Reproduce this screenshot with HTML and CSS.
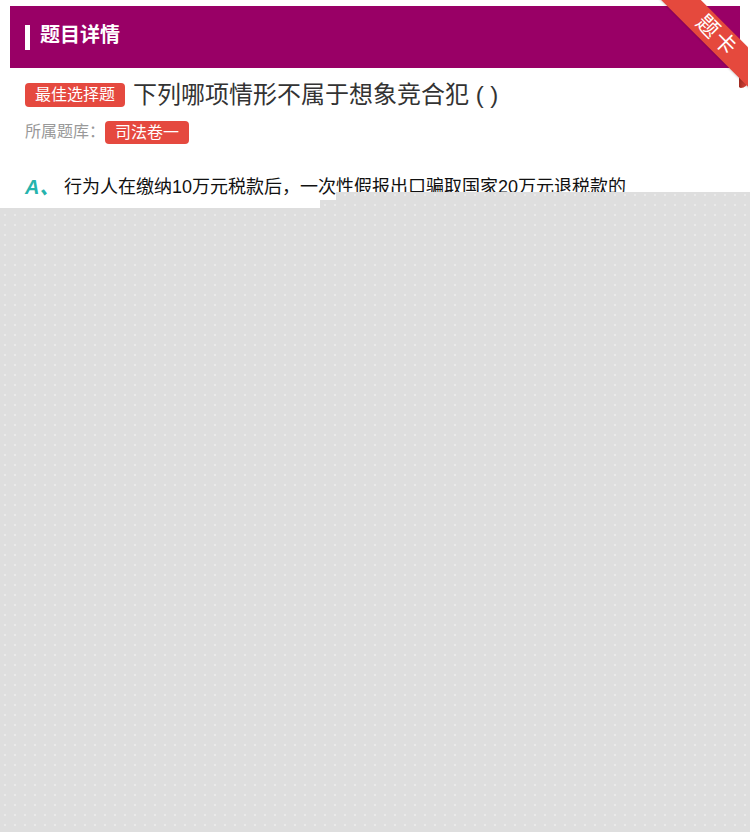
FILE: index.html
```html
<!DOCTYPE html>
<html lang="zh-CN">
<head>
<meta charset="utf-8">
<title>题目详情</title>
<link rel="stylesheet" href="styles.css">
</head>
<body>
<div class="page">
  <header class="header">
    <span class="header-bar"></span>
    <h1 class="header-title">题目详情</h1>
  </header>
  <div class="ribbon-wrap">
    <div class="ribbon-fold"></div>
    <div class="ribbon">题卡</div>
  </div>
  <main class="content">
    <div class="q-line">
      <span class="tag">最佳选择题</span>
      <span class="q-text">下列哪项情形不属于想象竞合犯 ( )</span>
    </div>
    <div class="bank-line">
      <span class="bank-label">所属题库：</span>
      <span class="tag tag-small">司法卷一</span>
    </div>
    <div class="option">
      <span class="option-key">A、</span>
      <span class="option-text">行为人在缴纳10万元税款后，一次性假报出口骗取国家20万元退税款的</span>
    </div>
  </main>
  <div class="cover cover-main"></div>
  <div class="cover cover-top"></div>
  <div class="cover cover-step"></div>
</div>
</body>
</html>
```
FILE: styles.css
```css
html, body {
  margin: 0;
  padding: 0;
  background: #ffffff;
}
body {
  font-family: "Liberation Sans", "Noto Sans CJK SC", sans-serif;
  width: 750px;
  height: 832px;
  overflow: hidden;
}
.page {
  position: relative;
  width: 750px;
  height: 832px;
  padding-top: 6px;
  box-sizing: border-box;
}
.header {
  margin: 0 10px;
  height: 62px;
  background: #990066;
  display: flex;
  align-items: center;
  padding-left: 15px;
  gap: 10px;
}
.header-bar {
  width: 5px;
  height: 25px;
  background: #ffffff;
}
.header-title {
  margin: 0;
  padding-bottom: 5px;
  font-size: 20px;
  font-weight: bold;
  color: #ffffff;
  line-height: 24px;
}
.ribbon-wrap {
  position: absolute;
  top: 0;
  left: 650px;
  width: 98px;
  height: 90px;
  overflow: hidden;
}
.ribbon-fold {
  position: absolute;
  left: 89px;
  top: 52px;
  width: 9px;
  height: 36px;
  background: linear-gradient(to right, #9e2a20, #d9443a 70%, #e24c40);
  border-radius: 0 0 8px 2px;
}
.ribbon {
  position: absolute;
  left: -19px;
  top: 21px;
  width: 170px;
  height: 28px;
  line-height: 28px;
  background: #e5493d;
  color: #ffffff;
  font-size: 22px;
  text-align: center;
  letter-spacing: 2px;
  text-indent: 2px;
  transform: rotate(45deg);
  box-shadow: 0 1px 2px rgba(0,0,0,0.15);
}
.content {
  padding: 0 25px;
}
.q-line {
  margin-top: 12px;
  height: 30px;
  display: flex;
  align-items: center;
  gap: 8px;
}
.tag {
  display: inline-block;
  background: #e5493f;
  color: #ffffff;
  font-size: 16px;
  line-height: 24px;
  padding: 0 10px;
  border-radius: 4px;
}
.tag-small {
  line-height: 23px;
}
.q-text {
  font-size: 24px;
  line-height: 30px;
  color: #333333;
}
.bank-line {
  margin-top: 10px;
  height: 24px;
  display: flex;
  align-items: center;
}
.bank-label {
  font-size: 16px;
  color: #999999;
  line-height: 24px;
}
.option {
  margin-top: 29px;
  display: flex;
  align-items: center;
  height: 28px;
}
.option-key {
  width: 39px;
  font-size: 20px;
  font-weight: bold;
  font-style: italic;
  color: #26b3ad;
  line-height: 28px;
}
.option-text {
  font-size: 18px;
  color: #111111;
  line-height: 28px;
}
.cover {
  position: absolute;
  background-color: #dedede;
  background-image: radial-gradient(circle, #e9e9e9 0.9px, transparent 1.2px);
  background-size: 10px 10px;
  background-position: 0 0;
  background-attachment: fixed;
}
.cover-main {
  left: 0;
  top: 208px;
  width: 750px;
  height: 624px;
}
.cover-top {
  left: 336px;
  top: 192px;
  width: 414px;
  height: 16px;
}
.cover-step {
  left: 320px;
  top: 200px;
  width: 16px;
  height: 8px;
}
```
